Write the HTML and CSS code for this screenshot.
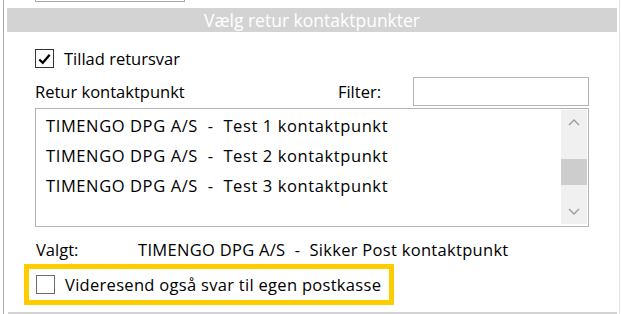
FILE: index.html
```html
<!DOCTYPE html>
<html lang="da">
<head>
    <meta charset="UTF-8">
    <title>Vælg retur kontaktpunkter</title>
    <link rel="stylesheet" href="styles.css">
</head>
<body>
    <div class="frame">
        <div class="top-stub"></div>

        <div class="section-header">Vælg retur kontaktpunkter</div>

        <div class="content">
            <label class="check-row">
                <span class="checkbox checked">
                    <svg viewBox="0 0 18 18" width="18" height="18">
                        <path d="M3.5 9.5 L7.2 13 L14.5 4.5" fill="none" stroke="#000" stroke-width="2.4"/>
                    </svg>
                </span>
                <span class="check-label">Tillad retursvar</span>
            </label>

            <div class="filter-row">
                <span class="field-label">Retur kontaktpunkt</span>
                <span class="filter-label">Filter:</span>
                <input type="text" class="filter-input">
            </div>

            <div class="list-box">
                <ul class="list-items">
                    <li>TIMENGO DPG A/S  -  Test 1 kontaktpunkt</li>
                    <li>TIMENGO DPG A/S  -  Test 2 kontaktpunkt</li>
                    <li>TIMENGO DPG A/S  -  Test 3 kontaktpunkt</li>
                </ul>
                <div class="scrollbar">
                    <div class="scroll-btn">
                        <svg viewBox="0 0 12 8" width="12" height="8"><path d="M1 7 L6 2 L11 7" fill="none" stroke="#9a9a9a" stroke-width="1.3"/></svg>
                    </div>
                    <div class="scroll-track">
                        <div class="scroll-thumb"></div>
                    </div>
                    <div class="scroll-btn">
                        <svg viewBox="0 0 12 8" width="12" height="8"><path d="M1 1 L6 6 L11 1" fill="none" stroke="#9a9a9a" stroke-width="1.3"/></svg>
                    </div>
                </div>
            </div>

            <div class="selected-row">
                <span class="selected-label">Valgt:</span>
                <span class="selected-value">TIMENGO DPG A/S  -  Sikker Post kontaktpunkt</span>
            </div>

            <div class="highlight-box">
                <label class="check-row">
                    <span class="checkbox"></span>
                    <span class="check-label wide">Videresend også svar til egen postkasse</span>
                </label>
            </div>
        </div>

        <div class="section-header next"></div>
    </div>
</body>
</html>
```

FILE: styles.css
```css
:root {
    --text-color: #000000;
    --frame-border: #a9a9a9;
    --frame-border-light: #e3e3e3;
    --header-bg: #d3d3d3;
    --input-border: #b4b4b4;
    --scroll-bg: #f0f0f0;
    --scroll-thumb: #cdcdcd;
    --highlight: #ffcc00;
}

html, body {
    margin: 0;
    padding: 0;
    background-color: #ffffff;
}

body {
    font-family: 'Open Sans', 'Noto Sans', sans-serif;
    font-size: 16.5px;
    color: var(--text-color);
    width: 622px;
    height: 314px;
    overflow: hidden;
}

.frame {
    margin-left: 3px;
    width: 615px;
    height: 314px;
    overflow: hidden;
    border-left: 1px solid var(--frame-border);
    border-right: 1px solid var(--frame-border-light);
}

.top-stub {
    margin-left: 31px;
    width: 148px;
    height: 1px;
    border-bottom: 1px solid var(--frame-border);
    border-left: 1px solid var(--frame-border);
    border-right: 1px solid var(--frame-border);
}

.section-header {
    margin: 6px 2px 0 3px;
    height: 24px;
    line-height: 24px;
    background-color: var(--header-bg);
    color: #ffffff;
    text-align: center;
    font-size: 17.5px;
}

.section-header.next {
    margin-top: 7px;
    margin-left: 4px;
}

.content {
    padding-left: 31px;
}

.check-row {
    display: flex;
    align-items: center;
    height: 19px;
    margin-top: 17px;
}

.checkbox {
    box-sizing: border-box;
    width: 19px;
    height: 19px;
    border: 1px solid #333333;
    background-color: #ffffff;
    display: flex;
    align-items: center;
    justify-content: center;
}

.check-label {
    margin-left: 10px;
    line-height: 20px;
}

.check-label.wide {
    letter-spacing: 0.3px;
}

.filter-row {
    display: flex;
    align-items: center;
    width: 554px;
    height: 29px;
    margin-top: 9px;
    line-height: 20px;
}

.field-label {
    flex: 1;
}

.filter-label {
    margin-right: 32px;
}

.filter-input {
    box-sizing: border-box;
    width: 176px;
    height: 29px;
    margin: 0;
    border: 1px solid var(--input-border);
    border-radius: 0;
    outline: none;
    font: inherit;
}

.list-box {
    box-sizing: border-box;
    display: flex;
    width: 554px;
    height: 119px;
    margin-top: 2px;
    border: 1px solid var(--input-border);
}

.list-items {
    flex: 1;
    list-style: none;
    margin: 0;
    padding: 2px 0 0 10px;
}

.list-items li {
    height: 30px;
    line-height: 30px;
    white-space: pre;
    letter-spacing: 0.6px;
}

.scrollbar {
    display: flex;
    flex-direction: column;
    width: 26px;
    margin: 1px 1px 2px 0;
    background-color: var(--scroll-bg);
}

.scroll-btn {
    height: 24px;
    display: flex;
    align-items: center;
    justify-content: center;
}

.scroll-track {
    flex: 1;
    display: flex;
    flex-direction: column;
    justify-content: flex-end;
    padding-bottom: 15px;
}

.scroll-thumb {
    height: 26px;
    background-color: var(--scroll-thumb);
}

.selected-row {
    display: flex;
    margin-top: 13px;
    line-height: 20px;
    white-space: pre;
}

.selected-label {
    width: 102px;
    padding-left: 1px;
}

.selected-value {
    letter-spacing: 0.3px;
}

.highlight-box {
    box-sizing: border-box;
    width: 370px;
    height: 41px;
    margin: 4px 0 0 -11px;
    border: 5px solid var(--highlight);
    padding-left: 7px;
    display: flex;
    align-items: center;
}

.highlight-box .check-row {
    margin-top: 0;
}

.highlight-box .checkbox {
    border-color: #6b6b6b;
}
```
